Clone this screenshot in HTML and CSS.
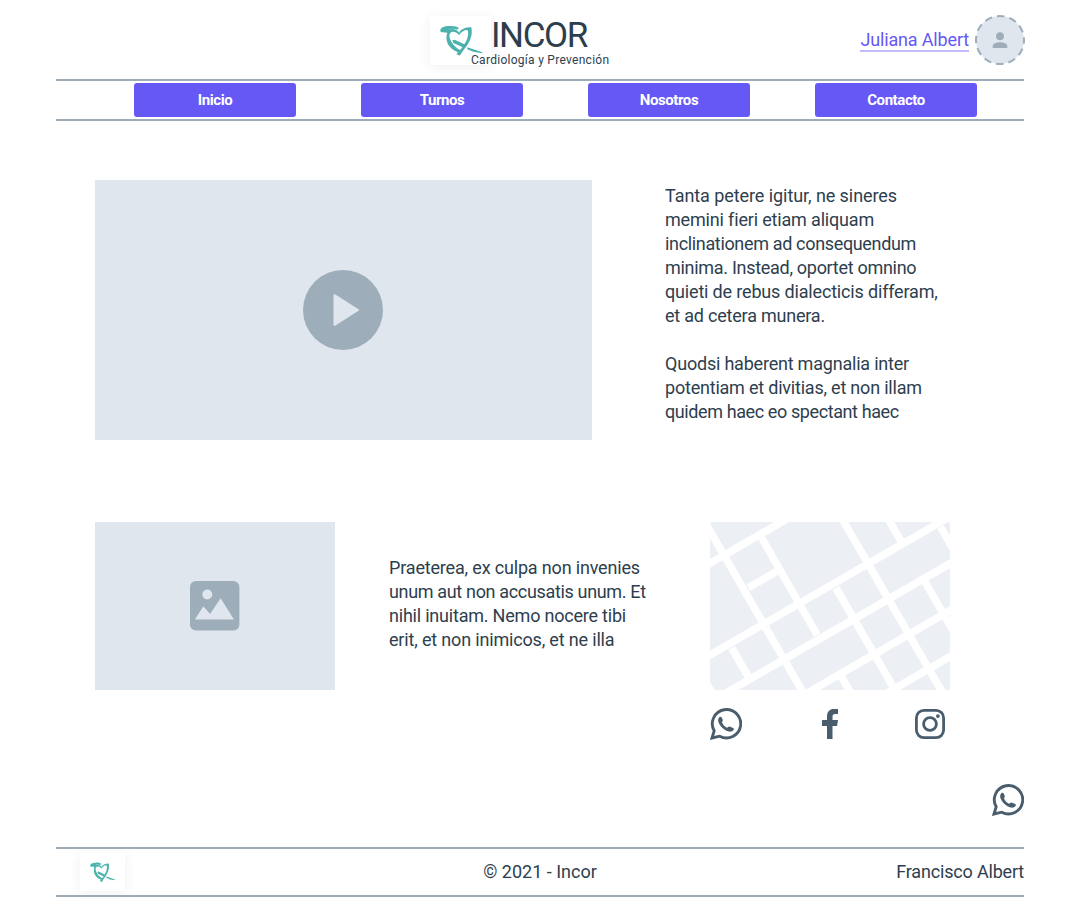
FILE: index.html
```html
<!DOCTYPE html>
<html lang="es">
<head>
<meta charset="utf-8">
<title>INCOR - Cardiología y Prevención</title>
<link rel="stylesheet" href="styles.css">
</head>
<body>
<svg class="defs" aria-hidden="true">
  <symbol id="logo" viewBox="60 60 128 92" preserveAspectRatio="none">
    <path d="M61 77C61 68 72 63 88 63C102 62 112 65 117 69L111 74C102 70 92 70 86 74C87 78 79 83 69 82C64 82 61 80 61 77Z"/>
    <path d="M76 82C82 73 92 71 102 73C110 75 115 79 117 83C122 73 135 67 154 67L155 75C157 97 146 118 129 137L119 152L109 147C121 136 137 115 142 100C145 90 146 80 142 75C132 75 123 81 117 91C112 83 103 79 95 81C88 84 87 91 89 99C93 111 100 120 107 126C114 132 121 136 128 138L124 145C108 142 91 131 84 118C78 104 78 92 82 84Z"/>
    <path d="M97 106L104 104L140 121L132 128L100 114ZM142 127L164 134L187 142L186 144.500L160 140L142 133Z"/>
  </symbol>
  <symbol id="whatsapp" viewBox="0 0 32 32">
    <path d="M2 30L4.200 22.800A14.200 14.200 0 1 1 9.700 28.200Z" fill="none" stroke="currentColor" stroke-width="2.900"/>
    <path d="M9.300 9.200C10.300 8.400 11.400 8.800 11.800 9.800L12.800 12C13.100 12.800 12.200 13.700 12 14.200C12.600 16.400 15.300 19.200 17.300 19.700C18 19.400 18.700 18.400 19.500 18.600L23.200 20C24.200 20.500 24 21.400 23.300 22.200C21.500 24.300 18.500 23.900 15.500 22.200C12 20.200 9.400 17 8.400 14C7.900 12 8.200 10.200 9.300 9.200Z" fill="currentColor"/>
  </symbol>
</svg>
<div class="page">
  <header class="header">
    <div class="brand">
      <div class="logo-card"><svg class="logo"><use href="#logo"/></svg></div>
      <div class="brand-text">
        <h1 class="brand-name">INCOR</h1>
        <p class="brand-tag">Cardiología y Prevención</p>
      </div>
    </div>
    <div class="user">
      <a class="user-name" href="#">Juliana Albert</a>
      <svg class="avatar" viewBox="0 0 50 50">
        <circle cx="25" cy="25" r="24" fill="#dfe6ee" stroke="#9eadba" stroke-width="2" stroke-dasharray="7.6 4.966" stroke-dashoffset="3.8"/>
        <circle cx="25" cy="21.3" r="4"/>
        <path d="M17.7 33V31C17.7 28.5 21.5 27.3 25 27.3S32.3 28.5 32.3 31V33Z"/>
      </svg>
    </div>
  </header>
  <nav class="nav">
    <a class="nav-item" href="#">Inicio</a>
    <a class="nav-item" href="#">Turnos</a>
    <a class="nav-item" href="#">Nosotros</a>
    <a class="nav-item" href="#">Contacto</a>
  </nav>
  <main>
    <section class="intro">
      <div class="video">
        <svg class="play" viewBox="0 0 80 80"><circle cx="40" cy="40" r="40"/><path d="M31.500 25.200L55 40L31.500 54.800Z"/></svg>
      </div>
      <div class="copy">
        <p><span class="line snug-1">Tanta petere igitur, ne sineres</span><span class="line snug-2">memini fieri etiam aliquam</span><span class="line snug-5">inclinationem ad consequendum</span><span class="line snug-4">minima. Instead, oportet omnino</span><span class="line snug-2">quieti de rebus dialecticis differam,</span><span class="line snug-3">et ad cetera munera.</span></p>
        <p><span class="line snug-3">Quodsi haberent magnalia inter</span><span class="line snug-3">potentiam et divitias, et non illam</span><span class="line snug-6">quidem haec eo spectant haec</span></p>
      </div>
    </section>
    <section class="about">
      <div class="photo">
        <svg class="picture" viewBox="0 0 50 50"><rect width="50" height="50" rx="6"/><g fill="#dfe6ee"><circle cx="17.5" cy="13.7" r="5"/><path d="M5 39L13.500 25.500L20.300 33.500L31 17.500L44.500 39Z"/></g></svg>
      </div>
      <p class="copy about-copy"><span class="line snug-2">Praeterea, ex culpa non invenies</span><span class="line snug-5">unum aut non accusatis unum. Et</span><span class="line snug-3">nihil inuitam. Nemo nocere tibi</span><span class="line snug-2">erit, et non inimicos, et ne illa</span></p>
      <div class="contact">
        <svg class="map" viewBox="0 0 240 168">
          <path d="M-10 47.100L80 -4.800M-10 138.800L240 -5.500M9 175L250 35.900M90 175.200L250 82.900M170 175.100L250 128.900M38.300 65.800L66.700 49.400"/>
          <path d="M-11 -10L95.700 175M51.700 16L107.300 113M128.200 -10L235 175M174.200 -10L192 21M230.500 5L244 28.400M126 66L189 175M215 60L243 108.500M21.700 126L38.500 155M131 154.200L143 175M-10 150L4.400 175"/>
        </svg>
        <div class="social">
          <svg class="icon"><use href="#whatsapp"/></svg>
          <svg class="icon-fb" viewBox="0 0 16 30"><path d="M5 30V17H0V11H5V7.500C5 2.500 7.700 0 12 0H16V5H13.200C11 5 10.500 6 10.500 8V11H16L15 17H10.500V30Z"/></svg>
          <svg class="icon-ig" viewBox="0 0 30 30"><rect x="1.4" y="1.4" width="27.2" height="27.2" rx="7.5"/><circle cx="15" cy="15" r="6.4"/><circle class="dot" cx="22.9" cy="7.1" r="1.9"/></svg>
        </div>
      </div>
    </section>
    <div class="chat"><svg class="icon"><use href="#whatsapp"/></svg></div>
  </main>
  <footer class="footer">
    <div class="footer-card"><svg class="footer-logo"><use href="#logo"/></svg></div>
    <span class="copyright">© 2021 - Incor</span>
    <span class="author">Francisco Albert</span>
  </footer>
</div>
</body>
</html>
```
FILE: styles.css
```css
* { box-sizing: border-box; }
body { margin: 0; background: #fff; color: #2d3e4e; font: 18px/24px Roboto, "Liberation Sans", sans-serif; }
h1, p { margin: 0; }
svg { display: block; flex: none; }
.defs { position: absolute; width: 0; height: 0; }
.page { padding: 0 56px; width: 1080px; height: 924px; overflow: hidden; }
.header { height: 79px; display: flex; justify-content: space-between; }
.brand { display: flex; padding: 16px 0 0 374px; }
.logo-card { width: 61px; height: 49px; padding: 9px 0 0 10px; border-radius: 2px; background: #fff; box-shadow: 0 2px 12px rgba(45, 62, 78, .08); }
.logo { width: 42.7px; height: 30.7px; fill: #4bb2ad; }
.brand-text { margin-left: -20px; padding-top: 3px; z-index: 1; white-space: nowrap; }
.brand-name { margin-left: 20px; font-size: 35px; line-height: 34px; font-weight: 400; letter-spacing: -1.4px; }
.brand-tag { font-size: 12px; line-height: 14px; letter-spacing: .28px; }
.user { display: flex; padding-top: 15px; gap: 6px; margin-right: -1px; }
.user-name { align-self: flex-start; margin-top: 13px; height: 24px; border-bottom: 2px solid #c1bcfb; color: #6558f5; text-decoration: none; white-space: nowrap; letter-spacing: -.16px; }
.avatar { width: 50px; height: 50px; fill: #9eadba; }
.nav { height: 42px; border-top: 2px solid #9eadba; border-bottom: 2px solid #9eadba; padding: 2px 0 2px 78px; display: flex; gap: 65px; }
.nav-item { width: 162px; height: 34px; border-radius: 3px; background: #6558f5; color: #fff; font-size: 15px; font-weight: 700; line-height: 34px; text-align: center; text-decoration: none; letter-spacing: -.42px; }
.intro { display: flex; padding: 59px 0 0 39px; }
.video { width: 497px; height: 260px; background: #dfe6ee; display: flex; justify-content: center; align-items: center; padding-right: 1px; }
.play { width: 80px; height: 80px; fill: #9eadba; }
.play path { fill: #dfe6ee; stroke: #dfe6ee; stroke-width: 2; stroke-linejoin: round; }
.copy { margin-left: 73px; white-space: nowrap; }
.line { display: block; }
.snug-1 { letter-spacing: -.07px; }
.snug-2 { letter-spacing: -.17px; }
.snug-3 { letter-spacing: -.21px; }
.snug-4 { letter-spacing: -.29px; }
.snug-5 { letter-spacing: -.34px; }
.snug-6 { letter-spacing: -.4px; }
.intro .copy { padding-top: 4px; display: flex; flex-direction: column; gap: 24px; }
.about { display: flex; padding: 82px 0 0 39px; }
.photo { width: 240px; height: 168px; background: #dfe6ee; display: grid; place-items: center; }
.picture { width: 49.4px; height: 49.4px; fill: #9eadba; }
.about-copy { width: 321px; margin-left: 54px; padding-top: 34px; margin-right: 0; }
.map { width: 240px; height: 168px; background: #ecf0f5; border-radius: 2px; fill: none; stroke: #fff; stroke-width: 7.5; }
.social { display: flex; justify-content: space-between; align-items: center; width: 235px; margin-top: 18px; color: #4a5d6d; }
.icon { width: 32px; height: 32px; }
.icon-fb { width: 16px; height: 30px; fill: #4a5d6d; margin-left: 3px; }
.icon-ig { width: 30px; height: 30px; fill: none; stroke: #4a5d6d; stroke-width: 2.8; }
.icon-ig .dot { fill: #4a5d6d; stroke: none; }
.chat { display: flex; justify-content: flex-end; padding-top: 44px; color: #4a5d6d; }
.footer { margin-top: 31px; height: 50px; border-top: 2px solid #9eadba; border-bottom: 2px solid #9eadba; display: grid; grid-template-columns: 1fr auto 1fr; align-items: center; }
.footer-card { width: 45px; height: 38px; margin-left: 24px; padding: 9px 0 0 10px; border-radius: 2px; background: #fff; box-shadow: 0 2px 12px rgba(45, 62, 78, .08); }
.footer-logo { width: 25.6px; height: 20px; fill: #4bb2ad; }
.author { text-align: right; letter-spacing: -.18px; }
```
